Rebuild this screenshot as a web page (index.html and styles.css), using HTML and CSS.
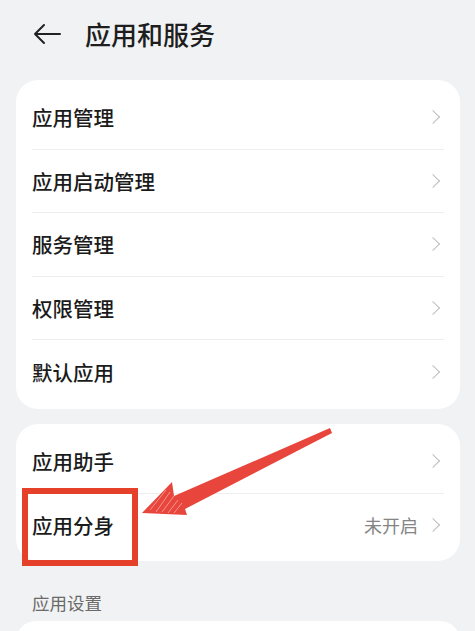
FILE: index.html
```html
<!DOCTYPE html>
<html lang="zh-CN">
<head>
<meta charset="utf-8">
<link rel="stylesheet" href="styles.css">
</head>
<body>
<div class="page">
  <header class="topbar">
    <svg class="back" width="28" height="22" viewBox="0 0 28 22"><path d="M27 11H2M11 2L2 11l9 9" fill="none" stroke="#222" stroke-width="2" stroke-linecap="round" stroke-linejoin="round"/></svg>
    <h1 class="title">应用和服务</h1>
  </header>

  <section class="card">
    <div class="row"><span class="label">应用管理</span><span class="chev"></span></div>
    <div class="row"><span class="label">应用启动管理</span><span class="chev"></span></div>
    <div class="row"><span class="label">服务管理</span><span class="chev"></span></div>
    <div class="row"><span class="label">权限管理</span><span class="chev"></span></div>
    <div class="row"><span class="label">默认应用</span><span class="chev"></span></div>
  </section>

  <section class="card card2">
    <div class="row"><span class="label">应用助手</span><span class="chev"></span></div>
    <div class="row"><span class="label">应用分身</span><span class="value">未开启</span><span class="chev"></span></div>
  </section>

  <div class="section-label">应用设置</div>
  <section class="card card3"></section>

  <div class="highlight"></div>
  <svg class="arrow" width="475" height="631" viewBox="0 0 475 631">
    <polygon points="330,428 332,433 185,509 187,515 142,513 172,482 174,496" fill="#e8463c"/>
    <g stroke="#f7a9a2" stroke-width="0.8">
      <line x1="150" y1="510" x2="166" y2="490"/>
      <line x1="156" y1="512" x2="170" y2="492"/>
      <line x1="162" y1="512" x2="174" y2="496"/>
      <line x1="168" y1="513" x2="178" y2="500"/>
      <line x1="174" y1="513" x2="182" y2="503"/>
    </g>
  </svg>
</div>
</body>
</html>
```

FILE: styles.css
```css
html, body {
  margin: 0;
  padding: 0;
}
body {
  background: #f1f2f4;
  font-family: "Noto Sans CJK SC", "Noto Sans", sans-serif;
  color: #1b1b1b;
}
.page {
  position: relative;
  width: 475px;
  height: 631px;
  overflow: hidden;
}
.topbar {
  display: flex;
  align-items: center;
  height: 68px;
  padding-left: 33px;
  gap: 24px;
}
.back {
  display: block;
}
.title {
  margin: 0;
  font-size: 26px;
  font-weight: 500;
  color: #1e1e1e;
  line-height: 1;
}
.card {
  margin: 12px 15px 0 16px;
  background: #fff;
  border-radius: 22px;
  padding: 6px 0 5px;
}
.card2 {
  margin-top: 15px;
  padding-bottom: 4px;
}
.row {
  box-sizing: border-box;
  display: flex;
  align-items: center;
  height: 63.6px;
  margin: 0 16px;
  border-bottom: 1px solid #eeeeef;
}
.row:last-child {
  border-bottom: none;
}
.label {
  font-size: 20.5px;
  font-weight: 500;
  flex: 1;
  color: #1b1b1b;
}
.value {
  font-size: 18px;
  color: #858585;
  margin-right: 10px;
}
.chev {
  width: 9px;
  height: 9px;
  border-top: 1.6px solid #bdbdbd;
  border-right: 1.6px solid #bdbdbd;
  transform: rotate(45deg);
  margin-right: 6px;
}
.section-label {
  font-size: 17.5px;
  color: #6a6a6a;
  padding: 30px 0 0 32px;
  line-height: 24px;
}
.card3 {
  margin-top: 6px;
  height: 40px;
  padding: 0;
}
.highlight {
  position: absolute;
  left: 22px;
  top: 488px;
  width: 104px;
  height: 66px;
  border: 6px solid #e5402a;
}
.arrow {
  position: absolute;
  left: 0;
  top: 0;
}
```
